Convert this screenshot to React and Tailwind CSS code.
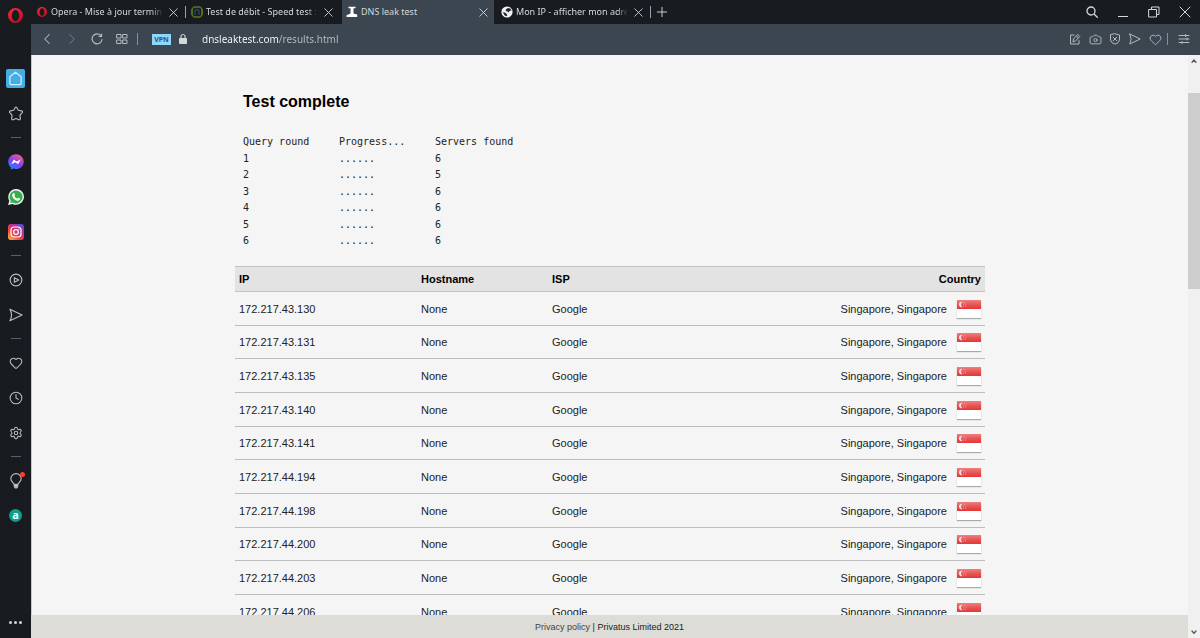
import React from 'react';
import {
  X,
  Plus,
  ChevronLeft,
  ChevronRight,
  Heart,
  Clock,
  Settings,
  Camera,
} from 'lucide-react';

const rounds = [
  { round: 1, found: 6 },
  { round: 2, found: 5 },
  { round: 3, found: 6 },
  { round: 4, found: 6 },
  { round: 5, found: 6 },
  { round: 6, found: 6 },
];

const servers = [
  '172.217.43.130',
  '172.217.43.131',
  '172.217.43.135',
  '172.217.43.140',
  '172.217.43.141',
  '172.217.44.194',
  '172.217.44.198',
  '172.217.44.200',
  '172.217.44.203',
  '172.217.44.206',
];

const OperaLogo = ({ className }) => (
  <svg viewBox="0 0 16 16" className={className} aria-hidden="true">
    <defs>
      <linearGradient id="opera" x1="0" y1="0" x2="0.6" y2="1">
        <stop offset="0" stopColor="#ff2b3d" />
        <stop offset="1" stopColor="#c20f22" />
      </linearGradient>
    </defs>
    <path
      fill="url(#opera)"
      fillRule="evenodd"
      d="M8 0a8 8 0 1 0 0 16A8 8 0 1 0 8 0zM8 2c2.200 0 3.900 2.600 3.900 6S10.200 14 8 14 4.100 11.400 4.100 8 5.800 2 8 2z"
    />
  </svg>
);

const SpeedIcon = () => (
  <svg viewBox="0 0 12 12" className="h-3 w-3" fill="none" aria-hidden="true">
    <path d="M3 1h6M3 11h6M1 3v6M11 3v6" stroke="#8a9a1e" strokeWidth="1.200" />
    <path d="M1 3l2-2M9 1l2 2M1 9l2 2M11 9l-2 2" stroke="#55701c" strokeWidth="1.400" />
    <path d="M4 9V5.500a2 2 0 0 1 4 0V9" stroke="#234a63" strokeWidth="1.400" />
  </svg>
);

const TapIcon = () => (
  <svg viewBox="0 0 12 12" className="h-3 w-3" fill="#fff" aria-hidden="true">
    <path d="M2.500 .8h7v1.500H7.500v5.200l3.700 1V11H.5V9.300L4.500 7.500V2.300h-2z" />
  </svg>
);

const GlobeIcon = () => (
  <svg viewBox="0 0 12 12" className="h-3 w-3" aria-hidden="true">
    <circle cx="6" cy="6" r="5.600" fill="#f1f1f1" />
    <path d="M1.800 6.200l2.200.3 1.500 1.200.8 1.300-.6 1.300-2-.8zM5 3.200l2-1.300 2.300.6 1.200 2-1.900.5-1.300 1.400-1.200-1.200L4.700 5z" fill="#23282d" />
  </svg>
);

const tabs = [
  { title: 'Opera - Mise à jour terminé', icon: <OperaLogo className="h-[10px] w-3" />, line: true },
  { title: 'Test de débit - Speed test :', icon: <SpeedIcon /> },
  { title: 'DNS leak test', icon: <TapIcon />, active: true },
  { title: 'Mon IP - afficher mon adre', icon: <GlobeIcon />, line: true },
];

const Stroke = ({ children, className = 'h-3 w-3', viewBox = '0 0 12 12' }) => (
  <svg
    viewBox={viewBox}
    className={className}
    fill="none"
    stroke="currentColor"
    strokeWidth="1"
    strokeLinecap="round"
    strokeLinejoin="round"
    aria-hidden="true"
  >
    {children}
  </svg>
);

const SendIcon = ({ className }) => (
  <Stroke className={className}>
    <path d="M.8 1l10.400 5L.8 11Q3.600 6 .8 1z" />
  </Stroke>
);

const Messenger = () => (
  <svg viewBox="0 0 16 16" className="h-4 w-4" aria-hidden="true">
    <defs>
      <linearGradient id="messenger" x1="0.2" y1="1" x2="0.8" y2="0">
        <stop offset="0" stopColor="#1487ff" />
        <stop offset="0.5" stopColor="#8a3ff5" />
        <stop offset="1" stopColor="#ff5f6d" />
      </linearGradient>
    </defs>
    <path fill="url(#messenger)" d="M8 .3C3.600.3.3 3.400.3 7.700c0 2.300 1 4.200 2.500 5.500l.1 2.500 2.400-1.100c.9.300 1.800.4 2.700.4 4.400 0 7.700-3.100 7.700-7.300S12.400.3 8 .3z" />
    <path fill="#fff" d="M3.100 10.200l2.700-4.700 2.700 2 4.300-2-2.700 4.700-2.800-2z" />
  </svg>
);

const Whatsapp = () => (
  <svg viewBox="0 0 16 16" className="h-4 w-4" aria-hidden="true">
    <path fill="#f4f4f4" d="M8.100 0a7.900 7.900 0 0 0-6.800 11.800L.1 16l4.300-1.100A7.900 7.900 0 1 0 8.100 0z" />
    <path fill="#35b04a" d="M8.100 1.400a6.500 6.500 0 0 0-5.300 10.300L2.100 14l2.500-.6A6.500 6.500 0 1 0 8.100 1.400z" />
    <path fill="#fff" d="M5.200 4.200c.5-.4 1-.2 1.200.2l.6 1.300c.1.400-.5.900-.6 1.200.6 1.300 1.500 2.100 2.800 2.700.4 0 .8-1 1.200-.9l1.500.8c.3.200.1 1-.2 1.400-.8.900-2 1-3.300.5-2-.8-3.600-2.400-4.200-4.400-.200-1.200.2-2.100 1-2.800z" />
  </svg>
);

const Instagram = () => (
  <svg viewBox="0 0 16 16" className="h-4 w-4" fill="none" aria-hidden="true">
    <defs>
      <linearGradient id="instagram" x1="0" y1="1" x2="0.8" y2="0">
        <stop offset="0" stopColor="#ffc04d" />
        <stop offset="0.4" stopColor="#f0433f" />
        <stop offset="0.7" stopColor="#c12d93" />
        <stop offset="1" stopColor="#5a4ad8" />
      </linearGradient>
    </defs>
    <rect width="16" height="16" rx="3" fill="url(#instagram)" />
    <rect x="3" y="3" width="10" height="10" rx="3" stroke="#fff" strokeWidth="1.200" />
    <circle cx="8" cy="8" r="2.400" stroke="#fff" strokeWidth="1.200" />
    <circle cx="10.900" cy="5.100" r=".7" fill="#fff" />
  </svg>
);

const sidebarItems = [
  {
    label: 'Speed Dial',
    icon: (
      <span className="flex h-[19px] w-[19px] items-center justify-center rounded-xs bg-[#43aee6] text-[#cfeeff]">
        <Stroke className="h-[15px] w-[15px]">
          <path d="M1.500 4.600L6 1l4.500 3.600v5.200a1 1 0 0 1-1 1h-7a1 1 0 0 1-1-1z" />
        </Stroke>
      </span>
    ),
  },
  {
    label: 'Bookmarks',
    icon: (
      <Stroke className="h-4 w-4" viewBox="0 0 14 14">
        <path d="M6.200 1.500q.8-1.100 1.600 0l1.200 2.200 2.900.6q1.400.4.5 1.500L10.500 8l.3 3q0 1.400-1.300 1L7 10.900 4.500 12q-1.300.4-1.300-1l.3-3-1.900-2.200q-.9-1.100.5-1.500l2.900-.6z" />
      </Stroke>
    ),
  },
  null,
  { label: 'Messenger', icon: <Messenger /> },
  { label: 'WhatsApp', icon: <Whatsapp /> },
  { label: 'Instagram', icon: <Instagram /> },
  null,
  {
    label: 'Player',
    icon: (
      <Stroke className="h-[14px] w-[14px]">
        <circle cx="6" cy="6" r="5" />
        <path d="M4.600 4l3.800 2-3.800 2z" />
      </Stroke>
    ),
  },
  { label: 'My Flow', icon: <SendIcon className="h-[14px] w-[14px]" /> },
  null,
  { label: 'Personal news', icon: <Heart className="h-[14px] w-[14px]" strokeWidth={1.8} /> },
  { label: 'History', icon: <Clock className="h-[14px] w-[14px]" strokeWidth={1.8} /> },
  { label: 'Settings', icon: <Settings className="h-[14px] w-[14px]" strokeWidth={1.8} /> },
  null,
  {
    label: 'Tips',
    icon: (
      <span className="relative">
        <Stroke className="h-4 w-[14px]" viewBox="0 0 12 14">
          <path d="M4.200 10C4 8.500 1.500 7.500 1.500 5a4.500 4.500 0 0 1 9 0c0 2.500-2.500 3.500-2.700 5z" />
          <path d="M4.500 10.500h3v1.200L6.700 13H5.300l-.8-1.300z" fill="currentColor" />
        </Stroke>
        <span className="absolute -top-px -right-[2px] h-[5px] w-[5px] rounded-full bg-[#ff3b30]"></span>
      </span>
    ),
  },
  {
    label: 'Amazon assistant',
    icon: (
      <span className="flex h-[13px] w-[13px] items-center justify-center rounded-full bg-[#0f9d8c] font-['Open_Sans',sans-serif] text-[11px] leading-[11px] font-bold text-white">
        <span className="pb-[2px]">a</span>
      </span>
    ),
  },
];

const Sidebar = () => (
  <aside className="flex w-[31px] shrink-0 flex-col items-center bg-[#181c21] text-[#b9bdc1]">
    <button type="button" aria-label="Menu" className="flex h-[31px] w-full items-center justify-center">
      <OperaLogo className="h-[15px] w-[15px]" />
    </button>
    <nav className="mt-[30px] flex w-full flex-col items-center">
      {sidebarItems.map((item, i) =>
        item ? (
          <button
            key={item.label}
            type="button"
            aria-label={item.label}
            className="flex h-[35px] w-full items-center justify-center"
          >
            {item.icon}
          </button>
        ) : (
          <div key={i} className="flex h-[13px] items-center">
            <div className="h-px w-[10px] bg-[#56636b]"></div>
          </div>
        )
      )}
    </nav>
    <button type="button" aria-label="More" className="mt-auto flex h-8 w-full items-center justify-center gap-[2px]">
      <span className="h-[3px] w-[3px] rounded-full bg-gray-300"></span>
      <span className="h-[3px] w-[3px] rounded-full bg-gray-300"></span>
      <span className="h-[3px] w-[3px] rounded-full bg-gray-300"></span>
    </button>
  </aside>
);

const WindowButton = ({ label, children }) => (
  <button type="button" aria-label={label} className="flex h-6 w-[31px] items-center justify-center">
    {children}
  </button>
);

const TabBar = () => (
  <div className="flex h-6 bg-[#181c21] pl-px text-[#d5d8da]">
    {tabs.map((tab) => (
      <React.Fragment key={tab.title}>
        <div
          className={`flex h-6 w-[152px] items-center gap-[3px] pr-[3px] pl-1 ${
            tab.active ? 'bg-[#3b4651]' : ''
          }`}
        >
          <span className="shrink-0">{tab.icon}</span>
          <span
            className={`flex-1 overflow-hidden text-[9px] leading-4 whitespace-nowrap ${
              tab.active ? '' : 'mask-r-from-90% mask-r-to-100%'
            }`}
          >
            {tab.title}
          </span>
          <button type="button" aria-label={`Close ${tab.title}`} className="shrink-0">
            <X className="h-[15px] w-[15px]" strokeWidth={1.4} />
          </button>
        </div>
        <div className="flex w-[3px] items-center justify-center">
          {tab.line && <div className="h-3 w-px bg-gray-400"></div>}
        </div>
      </React.Fragment>
    ))}
    <button type="button" aria-label="New tab" className="flex w-5 items-center justify-center">
      <Plus className="h-4 w-4" strokeWidth={1.4} />
    </button>
    <div className="ml-auto flex">
      <WindowButton label="Search tabs">
        <Stroke>
          <path d="M9 5A4 4 0 1 1 1 5a4 4 0 0 1 8 0zM8 8l3.300 3.300" strokeWidth="1.300" />
        </Stroke>
      </WindowButton>
      <WindowButton label="Minimize">
        <span className="mt-[9px] h-px w-[10px] bg-current"></span>
      </WindowButton>
      <WindowButton label="Restore">
        <Stroke>
          <path d="M1 3.500h7.500V11H1zM3.500 3.500V1H11v7.500H8.500" />
        </Stroke>
      </WindowButton>
      <WindowButton label="Close">
        <Stroke>
          <path d="M1 1l10 10M11 1L1 11" />
        </Stroke>
      </WindowButton>
    </div>
  </div>
);

const ToolButton = ({ label, children, wide }) => (
  <button
    type="button"
    aria-label={label}
    className={`flex h-full items-center justify-center ${wide ? 'w-[25px]' : 'w-5'}`}
  >
    {children}
  </button>
);

const AddressBar = () => (
  <div className="flex h-[31px] items-center bg-[#3b4651] pr-px pb-px text-[#b4bac0]">
    <div className="flex h-full items-center pl-[3px]">
      <ToolButton label="Back" wide>
        <ChevronLeft className="h-[18px] w-[18px]" strokeWidth={1.4} />
      </ToolButton>
      <ToolButton label="Forward" wide>
        <ChevronRight className="h-[18px] w-[18px] text-[#69747e]" strokeWidth={1.4} />
      </ToolButton>
      <ToolButton label="Reload" wide>
        <Stroke>
          <path d="M10.200 3A5 5 0 1 0 11 6.500M10.500 1v2.500H8" strokeWidth="1.200" />
        </Stroke>
      </ToolButton>
      <ToolButton label="Tab overview" wide>
        <Stroke>
          <path d="M1 1.500h4v3.500H1zM7 1.500h4v3.500H7zM1 7h4v3.500H1zM7 7h4v3.500H7z" />
        </Stroke>
      </ToolButton>
    </div>
    <div className="ml-[3px] h-3 w-px bg-[#87909a]"></div>
    <button
      type="button"
      className="ml-[14px] h-[11px] w-[19px] bg-[#8fd6fb] text-center text-[7px] leading-[11px] font-bold text-[#31556b]"
    >
      VPN
    </button>
    <button type="button" aria-label="Site information" className="ml-[7px]">
      <svg viewBox="0 0 10 12" className="h-3 w-[10px]" fill="none" aria-hidden="true">
        <path d="M3 5V3.500a2 2 0 0 1 4 0V5" stroke="#c9cdd1" strokeWidth="1.200" />
        <rect x="1" y="5" width="8" height="6" rx=".8" fill="#d5d8db" />
      </svg>
    </button>
    {/* host is brighter than the path */}
    <input
      type="text"
      aria-label="Address"
      defaultValue="dnsleaktest.com/results.html"
      className="ml-[14px] min-w-0 flex-1 bg-linear-to-r from-white from-[77px] to-[#b9bfc5] to-[77px] bg-clip-text text-[10px] leading-4 text-transparent outline-none"
    />
    <div className="flex h-full items-center">
      <ToolButton label="Edit page">
        <Stroke>
          <path d="M5 2H1.500v9h8.500V7.500M4 8.500l.6-2.600L8.800 1.500l2 2L6.500 7.900zM7.500 3l2 2" />
        </Stroke>
      </ToolButton>
      <ToolButton label="Snapshot">
        <Camera className="h-[13px] w-[13px]" strokeWidth={1.7} />
      </ToolButton>
      <ToolButton label="Ad blocker">
        <Stroke>
          <path d="M6 .8l4.500 1.200v5Q10 10 6 11.200 2 10 1.500 7V2zM4.200 4.200l3.600 3.600M7.800 4.200L4.200 7.800" />
        </Stroke>
      </ToolButton>
      <ToolButton label="Send to My Flow">
        <SendIcon className="h-3 w-3" />
      </ToolButton>
      <ToolButton label="Add to bookmarks">
        <Heart className="h-[13px] w-[13px]" strokeWidth={1.7} />
      </ToolButton>
    </div>
    <div className="ml-[2px] h-3 w-px bg-[#87909a]"></div>
    <button type="button" aria-label="Easy setup" className="flex h-full w-[31px] items-center justify-center">
      <Stroke>
        <path d="M1 2.500h10M1 6h10M1 9.500h10M7.500 1.500v2M9 5v2M4 8.500v2" />
      </Stroke>
    </button>
  </div>
);

const SingaporeFlag = () => (
  <svg viewBox="0 0 24 18" className="h-[18px] w-6 shrink-0 shadow-[0_1px_1px_#aaa]" role="img" aria-label="Singapore flag">
    <defs>
      <linearGradient id="flagRed" x1="0" y1="0" x2="0" y2="1">
        <stop offset="0" stopColor="#ee8080" />
        <stop offset="0.5" stopColor="#e85555" />
        <stop offset="1" stopColor="#e23737" />
      </linearGradient>
    </defs>
    <rect width="24" height="18" fill="#fff" />
    <rect width="24" height="9" fill="url(#flagRed)" />
    <path d="M5.500 1.800a2.800 2.800 0 1 0 0 5.400 3.200 3.200 0 0 1 0-5.400z" fill="#fbe3e3" />
    <g fill="#f3a5a5">
      <circle cx="7.500" cy="2.500" r=".6" />
      <circle cx="6.200" cy="4" r=".6" />
      <circle cx="8.900" cy="4" r=".6" />
      <circle cx="6.700" cy="6" r=".6" />
      <circle cx="8.400" cy="6" r=".6" />
    </g>
  </svg>
);

const Results = () => (
  <div className="mx-auto w-full max-w-[750px]">
    <h1 className="px-2 pt-[37px] text-[16px] leading-5 font-bold text-black">Test complete</h1>

    {/* Query rounds */}
    <table className="mt-[21px] ml-2 text-left font-['DejaVu_Sans_Mono',monospace] text-[10px] leading-4 text-[#222]">
      <thead>
        <tr className="h-[17px]">
          <th className="w-24 p-0 font-normal">Query round</th>
          <th className="w-24 p-0 font-normal">Progress...</th>
          <th className="w-24 p-0 font-normal">Servers found</th>
        </tr>
      </thead>
      <tbody>
        {rounds.map((r) => (
          <tr key={r.round} className="h-4 odd:h-[17px]">
            <td className="p-0">{r.round}</td>
            <td className="p-0">......</td>
            <td className="p-0">{r.found}</td>
          </tr>
        ))}
      </tbody>
    </table>

    {/* Servers */}
    <table className="mt-[17px] w-full table-fixed border-collapse text-left text-[11px] leading-4 text-[#222]">
      <thead>
        <tr className="h-[25px] border-y border-[#c2c2c2] bg-[#e3e3e3] text-black">
          <th className="w-[182px] px-1 py-0 font-bold">IP</th>
          <th className="w-[131px] px-1 py-0 font-bold">Hostname</th>
          <th className="w-[131px] px-1 py-0 font-bold">ISP</th>
          <th className="px-1 py-0 text-right font-bold">Country</th>
        </tr>
      </thead>
      <tbody>
        {servers.map((ip) => (
          <tr key={ip} className="h-[34px] border-b border-[#bdbdbd] nth-[3n+2]:h-[33px]">
            <td className="px-1 py-0">{ip}</td>
            <td className="px-1 py-0">None</td>
            <td className="px-1 py-0">Google</td>
            <td className="px-1 py-0">
              <div className="flex items-center justify-end gap-[10px]">
                <span>Singapore, Singapore</span>
                <SingaporeFlag />
              </div>
            </td>
          </tr>
        ))}
      </tbody>
    </table>
  </div>
);

const Scrollbar = () => (
  <div className="flex w-3 shrink-0 flex-col items-center bg-[#f0f0f0] text-[#555]">
    <button type="button" aria-label="Scroll up" className="flex h-3 items-center">
      <Stroke className="h-2 w-2">
        <path d="M3 8l3-3.500L9 8" strokeWidth="2" />
      </Stroke>
    </button>
    <div className="flex w-full flex-1 flex-col">
      <div className="h-[26px]"></div>
      <div className="h-[196px] bg-[#cdcdcd]"></div>
    </div>
    <button type="button" aria-label="Scroll down" className="flex h-3 items-center">
      <Stroke className="h-2 w-2">
        <path d="M3 4.500L6 8l3-3.500" strokeWidth="2" />
      </Stroke>
    </button>
  </div>
);

const App = () => {
  return (
    <div className="flex h-screen overflow-hidden font-['Noto_Sans',sans-serif]">
      <Sidebar />
      <div className="flex min-w-0 flex-1 flex-col">
        <TabBar />
        <AddressBar />
        <div className="flex min-h-0 flex-1 font-['Liberation_Sans',Arial,sans-serif]">
          <div className="flex min-w-0 flex-1 flex-col bg-[#f5f5f5]">
            <main className="min-h-0 flex-1 overflow-hidden border-l border-[#c9c9c9]">
              <Results />
            </main>
            <footer className="bg-[#dddcd6] pt-[2px] text-center text-[9px] leading-[21px] text-[#222]">
              <a href="#privacy" className="text-[#444]">Privacy policy</a> | Privatus Limited 2021
            </footer>
          </div>
          <Scrollbar />
        </div>
      </div>
    </div>
  );
};

export default App;
